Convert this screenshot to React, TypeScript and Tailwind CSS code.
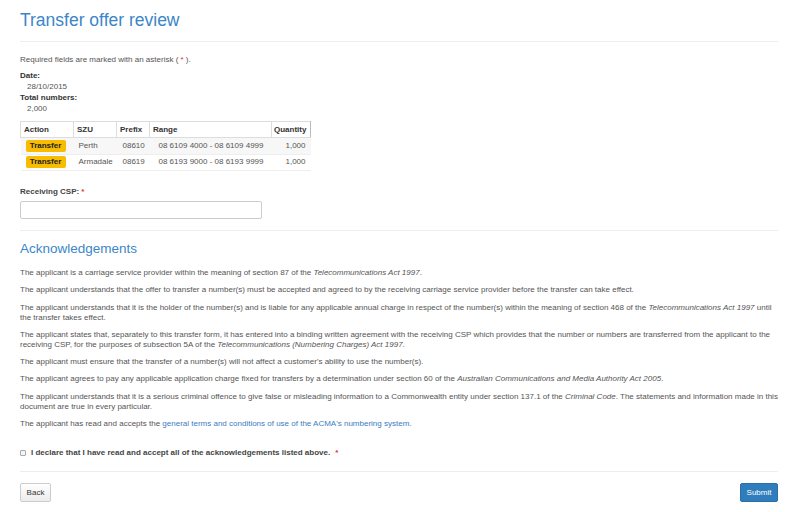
import React from "react";

const rows = [
  { szu: "Perth", prefix: "08610", range: "08 6109 4000 - 08 6109 4999", qty: "1,000" },
  { szu: "Armadale", prefix: "08619", range: "08 6193 9000 - 08 6193 9999", qty: "1,000" },
];

function Req() {
  return <span className="text-[#d9342b]">*</span>;
}

export default function App() {
  return (
    <div
      className="w-[800px] h-[512px] overflow-hidden bg-white pl-[20px] pr-[22px] text-[8px] text-[#555]"
      style={{ fontFamily: '"Liberation Sans", Arial, sans-serif' }}
    >
      {/* Page header */}
      <h1 className="pt-[10px] text-[17.5px] leading-[20px] text-[#3b86c6]">Transfer offer review</h1>
      <div className="mt-[11px] border-t border-[#eee]" />

      <p className="mt-[13px] leading-[10px]">
        Required fields are marked with an asterisk ( <Req /> ).
      </p>

      {/* Summary */}
      <div className="mt-[5px] leading-[11px]">
        <div className="font-bold text-[#333]">Date:</div>
        <div className="pl-[7px]">28/10/2015</div>
        <div className="font-bold text-[#333]">Total numbers:</div>
        <div className="pl-[7px]">2,000</div>
      </div>

      {/* Numbers table */}
      <table className="mt-[7px] w-[290px] border-collapse table-fixed">
        <colgroup>
          <col className="w-[53px]" />
          <col className="w-[43px]" />
          <col className="w-[33px]" />
          <col className="w-[122px]" />
          <col className="w-[39px]" />
        </colgroup>
        <thead>
          <tr className="h-[16px] text-[#333] font-bold">
            <th className="border border-[#ddd] pl-[3px] text-left font-bold">Action</th>
            <th className="border border-[#ddd] pl-[3px] text-left font-bold">SZU</th>
            <th className="border border-[#ddd] pl-[3px] text-left font-bold">Prefix</th>
            <th className="border border-[#ddd] pl-[3px] text-left font-bold">Range</th>
            <th className="border border-[#ddd] border-r-[#bbb] pl-[2px] text-left font-bold">Quantity</th>
          </tr>
        </thead>
        <tbody>
          {rows.map((r, i) => (
            <tr key={r.prefix} className={`h-[16.5px] border-b border-[#eee] ${i === 0 ? "bg-[#f7f7f7]" : ""}`}>
              <td className="pl-[5px]">
                <span className="block w-[40px] h-[12px] rounded-[2px] bg-[#f8bc00] text-center leading-[12px] font-bold text-[#222]">
                  Transfer
                </span>
              </td>
              <td className="pl-[5px]">{r.szu}</td>
              <td className="pl-[6px]">{r.prefix}</td>
              <td className="pl-[9px] whitespace-nowrap">{r.range}</td>
              <td className="pr-[5px] text-right">{r.qty}</td>
            </tr>
          ))}
        </tbody>
      </table>

      {/* Receiving CSP */}
      <label className="mt-[16px] block leading-[10px] font-bold text-[#444]">
        Receiving CSP: <Req />
      </label>
      <input
        type="text"
        className="mt-[4px] block w-[242px] h-[18px] rounded-[2px] border border-[#ccc] bg-white outline-none"
      />
      <div className="mt-[11px] border-t border-[#eee]" />

      {/* Acknowledgements */}
      <h2 className="mt-[10px] text-[13.5px] leading-[16px] text-[#3b86c6]">Acknowledgements</h2>
      <div className="mt-[11px] leading-[10px] [&>p]:mb-[7.3px]">
        <p>
          The applicant is a carriage service provider within the meaning of section 87 of the{" "}
          <i>Telecommunications Act 1997</i>.
        </p>
        <p>
          The applicant understands that the offer to transfer a number(s) must be accepted and agreed to by the
          receiving carriage service provider before the transfer can take effect.
        </p>
        <p>
          The applicant understands that it is the holder of the number(s) and is liable for any applicable annual
          charge in respect of the number(s) within the meaning of section 468 of the{" "}
          <i>Telecommunications Act 1997</i> until the transfer takes effect.
        </p>
        <p>
          The applicant states that, separately to this transfer form, it has entered into a binding written agreement
          with the receiving CSP which provides that the number or numbers are transferred from the applicant to the
          receiving CSP, for the purposes of subsection 5A of the{" "}
          <i>Telecommunications (Numbering Charges) Act 1997</i>.
        </p>
        <p>The applicant must ensure that the transfer of a number(s) will not affect a customer's ability to use the number(s).</p>
        <p>
          The applicant agrees to pay any applicable application charge fixed for transfers by a determination under
          section 60 of the <i>Australian Communications and Media Authority Act 2005</i>.
        </p>
        <p>
          The applicant understands that it is a serious criminal offence to give false or misleading information to a
          Commonwealth entity under section 137.1 of the <i>Criminal Code</i>. The statements and information made in
          this document are true in every particular.
        </p>
        <p>
          The applicant has read and accepts the{" "}
          <a className="text-[#3a7dbf]">general terms and conditions of use of the ACMA's numbering system.</a>
        </p>
      </div>

      {/* Declaration */}
      <label className="mt-[19px] flex items-center leading-[10px] font-bold text-[#444]">
        <span className="block w-[6px] h-[6px] rounded-[1px] border border-[#aaa] bg-[#f4f4f4]" />
        <span className="ml-[5px]">I declare that I have read and accept all of the acknowledgements listed above.</span>
        <span className="ml-[5px]">
          <Req />
        </span>
      </label>
      <div className="mt-[13px] border-t border-[#eee]" />

      {/* Actions */}
      <div className="mt-[11px] flex justify-between">
        <button className="w-[31px] h-[19px] rounded-[2px] border border-[#ccc] bg-gradient-to-b from-white to-[#ececec] text-[8px] text-[#333]">
          Back
        </button>
        <button className="w-[38px] h-[19px] rounded-[2px] border border-[#2a6fa8] bg-[#2f7dbc] text-[8px] text-white">
          Submit
        </button>
      </div>
    </div>
  );
}
